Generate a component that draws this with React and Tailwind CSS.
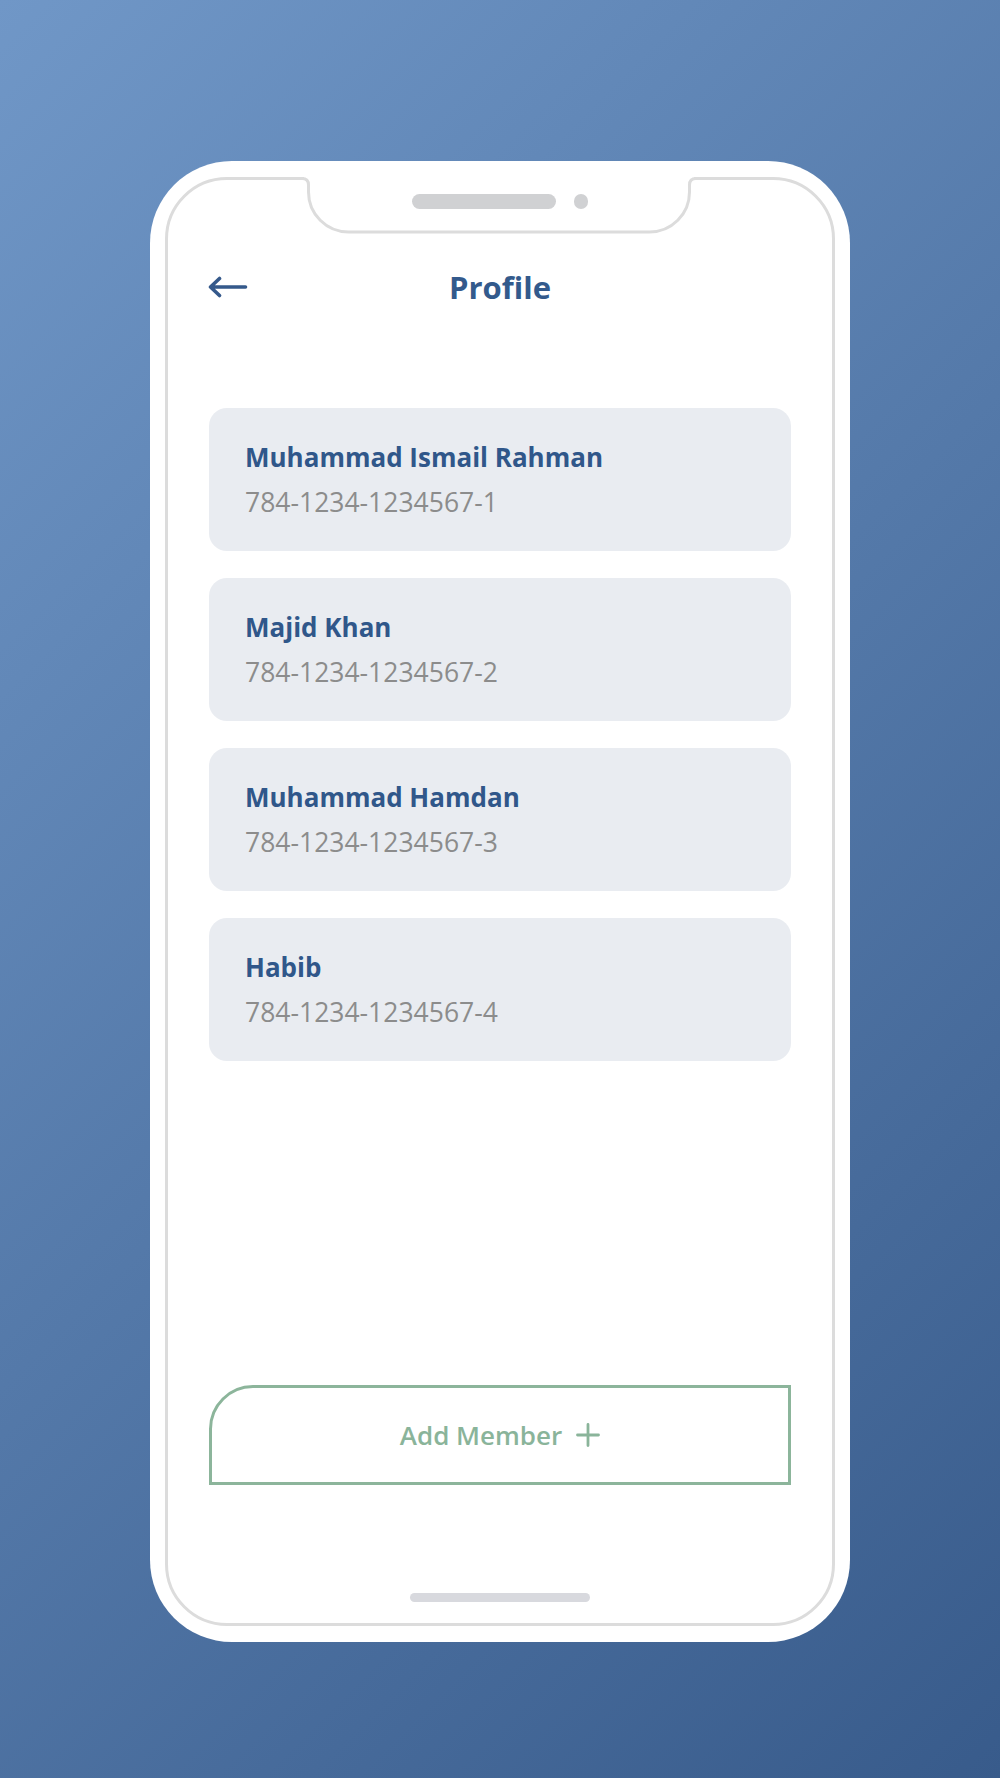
import React from "react";

const members = [
  { name: "Muhammad Ismail Rahman", id: "784-1234-1234567-1" },
  { name: "Majid Khan", id: "784-1234-1234567-2" },
  { name: "Muhammad Hamdan", id: "784-1234-1234567-3" },
  { name: "Habib", id: "784-1234-1234567-4" },
];

function Notch() {
  return (
    <svg
      className="absolute left-[116px] top-[-6px]"
      width="430"
      height="70"
      viewBox="0 0 430 70"
      fill="none"
    >
      <rect x="20" y="0" width="390" height="10" fill="#ffffff" />
      <path
        d="M0 4.5 H18 Q24.5 4.5 24.5 11 V18 A40 40 0 0 0 64.5 58 H365.5 A40 40 0 0 0 405.5 18 V11 Q405.5 4.5 412 4.5 H430"
        stroke="#dcdcdc"
        strokeWidth="3"
      />
    </svg>
  );
}

export default function App() {
  return (
    <div
      className="w-full h-[1778px] bg-[linear-gradient(135deg,#7097c7,#385b8b)] flex justify-center pt-[161px]"
      style={{ fontFamily: '"Open Sans", "Noto Sans", sans-serif' }}
    >
      <div className="w-[700px] h-[1481px] rounded-[82px] bg-white px-[15px] py-[16px]">
        <div className="relative h-full rounded-[62px] border-[3px] border-[#dcdcdc] flex flex-col px-[41px]">
          <Notch />
          <div className="flex justify-center items-center gap-[18px] mt-[14px] relative">
            <div className="w-[144px] h-[15px] rounded-full bg-[#d0d1d3]" />
            <div className="w-[14px] h-[15px] rounded-full bg-[#d0d1d3]" />
          </div>
          <div className="grid grid-cols-[1fr_auto_1fr] items-center h-[40px] mt-[58px]">
            <svg width="40" height="22" viewBox="0 0 40 22" fill="none" className="ml-[-1px]">
              <path
                d="M37.5 11 H2.5 M11.5 2.5 L2.5 11 L11.5 19.5"
                stroke="#35598b"
                strokeWidth="3.6"
                strokeLinecap="round"
                strokeLinejoin="round"
              />
            </svg>
            <h1 className="text-[31px] leading-[40px] font-bold text-[#335a8c]">Profile</h1>
            <div />
          </div>
          <div className="flex flex-col gap-[27px] mt-[101px]">
            {members.map((m) => (
              <div
                key={m.id}
                className="h-[143px] rounded-[18px] bg-[#e9ecf1] pl-[36px] pt-[34px]"
              >
                <div className="text-[26px] leading-[30px] font-bold text-[#30578a]">
                  {m.name}
                </div>
                <div className="mt-[15px] text-[26.5px] leading-[30px] text-[#8c8c8c]">
                  {m.id}
                </div>
              </div>
            ))}
          </div>
          <div className="flex-1" />
          <button className="h-[100px] w-full border-[3px] border-[#8cb59b] rounded-tl-[44px] flex items-center justify-center gap-[14px] text-[#8ab49a]">
            <span className="text-[26px] font-semibold leading-[30px]">Add Member</span>
            <svg width="24" height="24" viewBox="0 0 24 24" fill="none">
              <path d="M12 1.5 V22.5 M1.5 12 H22.5" stroke="#8ab49a" strokeWidth="2.8" strokeLinecap="round" />
            </svg>
          </button>
          <div className="mt-[108px] mb-[21px] mx-auto w-[180px] h-[9px] rounded-full bg-[#d8d9de]" />
        </div>
      </div>
    </div>
  );
}
